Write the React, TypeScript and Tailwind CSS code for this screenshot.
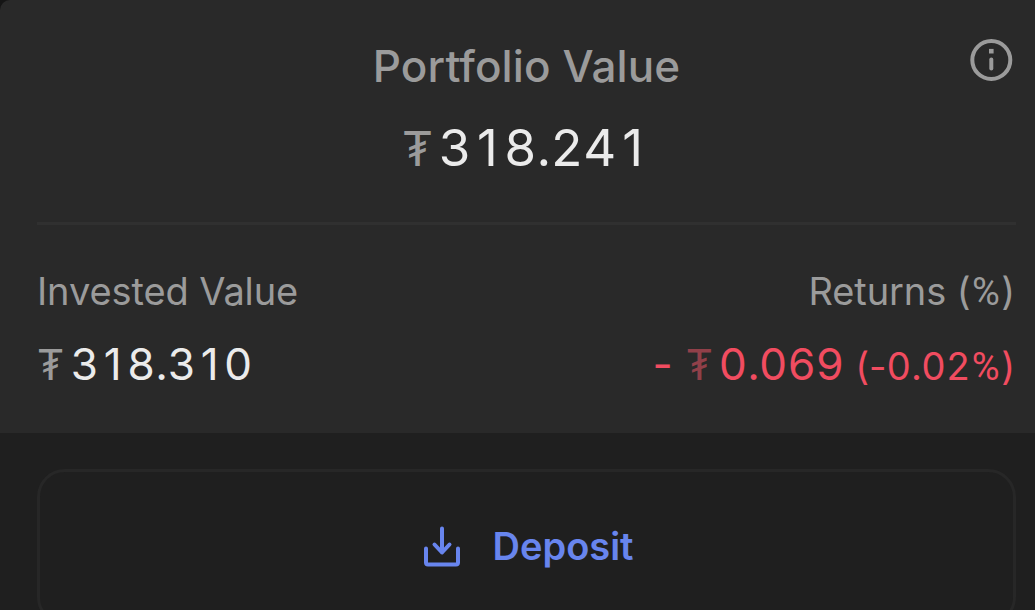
import type { ReactNode } from 'react'

export default function App() {
  return (
    <main className="h-[610px] w-[1035px] overflow-hidden bg-[#1f1f1f] font-['Inter',sans-serif]">
      <div className="bg-[#151515]">
        <section className="relative h-[433px] rounded-tl-[10px] bg-[#292929] pr-[19px] pl-[37px]">
          <InfoIcon />
          <div className="flex h-[222px] flex-col items-center pt-[40px]">
            <h1 className="text-[44px] leading-[53px] font-medium tracking-[0.1px] text-[#9b9b9b]">
              Portfolio Value
            </h1>
            <p className="mt-[25px] flex items-baseline pr-[2px] text-[51px] leading-[60px] text-[#ebebeb]">
              <Tether className="mr-[5px] text-[48px] text-[#9b9b9b]" />
              <Amount value="318.241" />
            </p>
          </div>
          <hr className="h-[3px] border-0 bg-[#303030]" />
          <div className="flex justify-between pt-[43px]">
            <Stat label={<>Invested Value</>}>
              <Tether className="mr-[6px] text-[42px] text-[#9b9b9b]" />
              <Amount value="318.310" className="text-[#ebebeb]" />
            </Stat>
            <Stat label={<>Returns (<Percent />)</>} end>
              <span className="mr-[13px] text-[#f14c60]">-</span>
              <Tether className="mr-[6px] text-[42px] text-[#914049]" />
              <Amount value="0.069" className="text-[#f14c60]" />
              <span className="ml-[11px] text-[38px] text-[#f14c60]">
                (-<Amount value="0.02" /><Percent />)
              </span>
            </Stat>
          </div>
        </section>
      </div>
      <div className="pt-[36px] pr-[19px] pl-[37px]">
        <button className="flex h-[156px] w-full items-center justify-center gap-[32px] rounded-[28px] border-[3px] border-[#272727] pb-px pl-[3px] text-[38px] font-semibold text-[#6885ee]">
          <DepositIcon />
          Deposit
        </button>
      </div>
    </main>
  )
}

function Stat({ label, end, children }: { label: ReactNode; end?: boolean; children: ReactNode }) {
  return (
    <div className={end ? 'flex flex-col items-end pr-px' : 'flex flex-col items-start'}>
      <p className="h-[46px] text-[38px] leading-[46px] tracking-[-0.1px] text-[#9b9b9b]">{label}</p>
      <p className="mt-[23px] flex items-baseline text-[44px] leading-[54px]">{children}</p>
    </div>
  )
}

// Equal-width digits that keep the plain "1" (Inter's tabular one has a foot)
function Amount({ value, className }: { value: string; className?: string }) {
  return (
    <span className={className}>
      {value.split('').map((char, i) => (
        <span
          key={i}
          className={char === '.' ? 'inline-block w-[0.27em] text-center' : 'inline-block w-[0.645em] text-center'}
        >
          {char}
        </span>
      ))}
    </span>
  )
}

function Percent() {
  return <span className="mx-[1.5px] font-['Roboto',sans-serif] leading-none">%</span>
}

function Tether({ className }: { className: string }) {
  return <span className={className}>₮</span>
}

function InfoIcon() {
  return (
    <svg
      className="absolute top-[38px] right-[22px] h-[44px] w-[44px] text-[#9b9b9b]"
      viewBox="0 0 44 44"
      fill="none"
      stroke="currentColor"
      strokeWidth="4"
    >
      <circle cx="22.3" cy="22" r="19" />
      <path d="M22.3 21.5v9" strokeLinecap="round" />
      <path d="M20 13.2h4.6" strokeWidth="4.6" />
    </svg>
  )
}

function DepositIcon() {
  return (
    <svg
      className="h-[42px] w-[38px]"
      viewBox="0 0 38 42"
      fill="none"
      stroke="currentColor"
      strokeWidth="4"
      strokeLinecap="round"
      strokeLinejoin="round"
    >
      <path d="M19 2.5v24M11.5 18.5l7.5 8 7.5-8" />
      <path d="M3 22.5v14q0 2 2 2h28q2 0 2-2v-14" />
    </svg>
  )
}
